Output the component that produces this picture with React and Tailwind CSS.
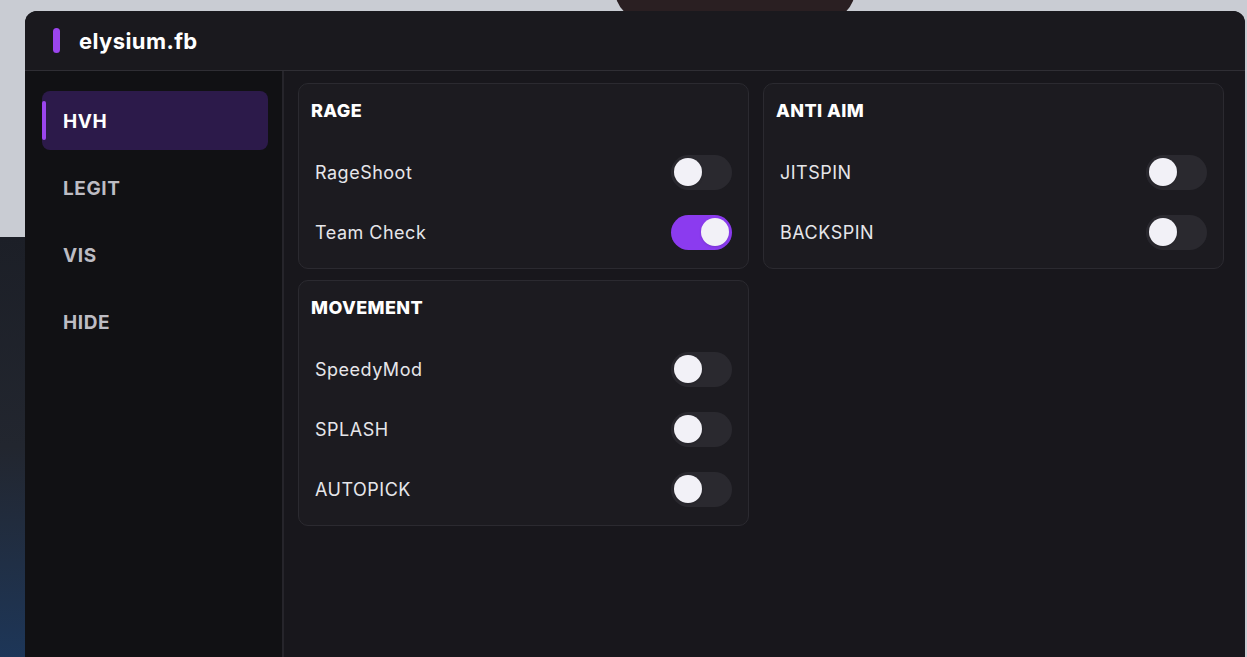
import React from 'react';

const font = { fontFamily: 'Inter, "Open Sans", sans-serif' };

const tabs = ['HVH', 'LEGIT', 'VIS', 'HIDE'];

const Toggle = ({ on }) => (
  <div
    className={`flex h-[35px] w-[61px] items-center rounded-full px-[3px] ${
      on ? 'justify-end bg-[#8b3bef]' : 'justify-start bg-[#2a292f]'
    }`}
  >
    <div className="h-[28px] w-[28px] rounded-full bg-[#f2f1f7] shadow" />
  </div>
);

const Card = ({ title, items }) => (
  <div className="rounded-[10px] border border-[#2b2a30] bg-[#1c1b20] pb-[6px]">
    <div className="flex h-[52px] items-center px-[12px] pt-[1px] text-[18px] font-extrabold tracking-[0.4px] text-white">
      {title}
    </div>
    <div className="pt-[6px]">
      {items.map(([label, on]) => (
        <div key={label} className="flex h-[60px] items-center justify-between px-4">
          <span className="text-[18px] tracking-[0.5px] text-[#e6e6ea]">{label}</span>
          <Toggle on={on} />
        </div>
      ))}
    </div>
  </div>
);

export default function App() {
  return (
    <div className="relative h-[657px] w-[1247px] overflow-hidden bg-[#c9ccd3]" style={font}>
      {/* backdrop behind the menu */}
      <div className="absolute left-[615px] top-[-40px] h-[60px] w-[240px] rounded-full bg-[#2a1f22]" />
      <div className="absolute left-0 top-[237px] h-[420px] w-[30px] bg-gradient-to-b from-[#1c1f27] via-[#22262f] to-[#1d3658]" />

      <div className="absolute left-[25px] top-[11px] flex h-[660px] w-[1220px] flex-col overflow-hidden rounded-t-[12px] bg-[#18171c]">
        {/* header */}
        <div className="flex h-[60px] shrink-0 items-center gap-[19px] border-b border-[#2f2e34] bg-[#1a191e] pl-[28px]">
          <div className="h-[25px] w-[7px] rounded-full bg-[#9b45ee]" />
          <span className="pt-[2px] text-[22px] font-bold tracking-[0.4px] text-white">elysium.fb</span>
        </div>

        <div className="flex flex-1">
          {/* sidebar */}
          <div className="flex w-[259px] shrink-0 flex-col gap-2 border-r-2 border-[#26252b] bg-[#111114] pl-[17px] pr-[14px] pt-[20px]">
            {tabs.map((t, i) => (
              <div
                key={t}
                className={`relative flex h-[59px] items-center rounded-[8px] pl-[21px] pt-[3px] text-[19px] font-bold tracking-[0.6px] ${
                  i === 0 ? 'bg-[#2c1a4a] text-white' : 'text-[#bdbcc3]'
                }`}
              >
                {i === 0 && (
                  <div className="absolute left-0 top-[10px] h-[39px] w-[4px] rounded-full bg-[#9b45ee]" />
                )}
                {t}
              </div>
            ))}
          </div>

          {/* content */}
          <div className="flex-1 pl-[14px] pt-[12px]">
            <div className="grid grid-cols-[451px_461px] items-start gap-x-[14px] gap-y-[11px]">
              <Card title="RAGE" items={[['RageShoot', false], ['Team Check', true]]} />
              <Card title="ANTI AIM" items={[['JITSPIN', false], ['BACKSPIN', false]]} />
              <Card
                title="MOVEMENT"
                items={[['SpeedyMod', false], ['SPLASH', false], ['AUTOPICK', false]]}
              />
            </div>
          </div>
        </div>
      </div>
    </div>
  );
}
